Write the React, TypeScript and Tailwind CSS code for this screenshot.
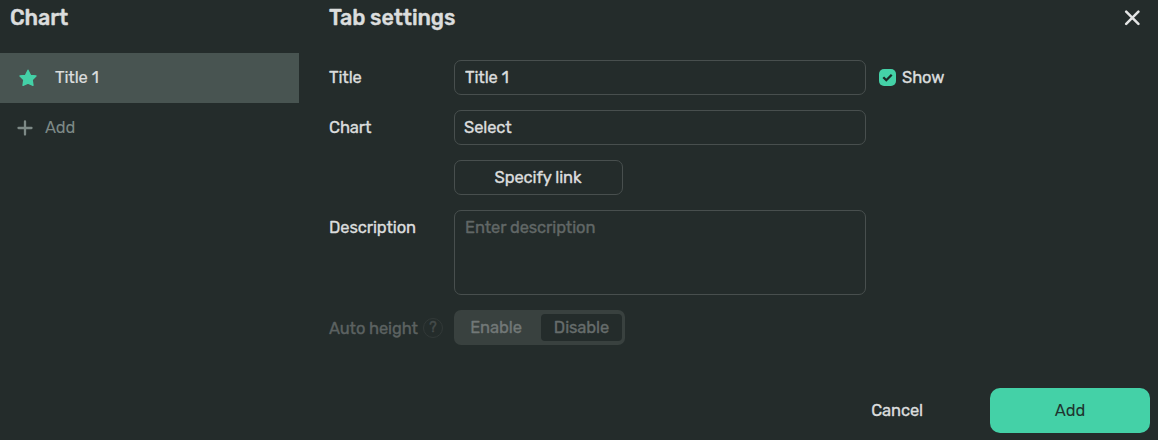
import { useState } from "react";

export default function App() {
  const [title, setTitle] = useState("Title 1");
  return (
    <div className="flex h-[440px] w-full overflow-hidden bg-[#242c2b] font-['Rubik','Roboto',sans-serif] text-[16.5px] leading-5 tracking-[-0.1px] text-[#dbdddd]">
      <aside className="w-[299px] shrink-0">
        <h2 className="h-[53px] pl-[10px] pt-[6px] text-[21.5px] font-medium leading-6 tracking-[-0.1px] [-webkit-text-stroke:0.4px]">Chart</h2>
        <div className="flex h-[50px] items-center bg-[#485451] pl-[19px]">
          <svg width="18" height="18" viewBox="0 0 18 18" fill="#44d1a7" stroke="#44d1a7" strokeWidth="1.3" strokeLinejoin="round">
            <path d="M9 1.2 11.5 6.3 17 7 13.2 10.9 14 16.4 9 14.1 4 16.4 4.8 10.9 1 7 6.5 6.3Z" />
          </svg>
          <span className="ml-[18px] [-webkit-text-stroke:0.2px]">Title 1</span>
        </div>
        <div className="flex h-[50px] items-center pl-[17px] text-[#7d8986]">
          <svg width="16" height="16" viewBox="0 0 16 16" fill="none" stroke="currentColor" strokeWidth="2.3" strokeLinecap="round">
            <path d="M8 1.5v13M1.5 8h13" />
          </svg>
          <span className="ml-3">Add</span>
        </div>
      </aside>
      <main className="flex min-w-0 flex-1 flex-col pl-[30px] pr-2">
        <header className="flex h-[60px] items-start justify-between pt-[6px]">
          <h2 className="text-[21.5px] font-medium leading-6 tracking-[-0.1px] [-webkit-text-stroke:0.4px]">Tab settings</h2>
          <svg width="16" height="16" viewBox="0 0 16 16" className="mr-[10px] mt-[4px]" fill="none" stroke="#e4e5e5" strokeWidth="2.5" strokeLinecap="round">
            <path d="m2.2 1.7 12.2 12.2M14.4 1.7 2.2 13.9" />
          </svg>
        </header>
        <div className="flex flex-col gap-[15px] [-webkit-text-stroke:0.35px]">
          <div className="flex h-[35px] items-center">
            <label className="w-[125px]">Title</label>
            <input
              value={title}
              onChange={(e) => setTitle(e.target.value)}
              className="h-[35px] w-[412px] rounded-[7px] border border-[#484f4e] bg-transparent px-[10px] outline-none"
            />
            <span className="ml-[13px] flex size-[17px] items-center justify-center rounded-[5px] bg-[#44d1a7]">
              <svg width="11" height="9" viewBox="0 0 11 9" fill="none" stroke="#1b2926" strokeWidth="2.3">
                <path d="m1.3 4.2 3 3L9.7 1.7" />
              </svg>
            </span>
            <span className="ml-[6px]">Show</span>
          </div>
          <div className="flex h-[35px] items-center">
            <label className="w-[125px]">Chart</label>
            <div className="flex h-[35px] w-[412px] items-center rounded-[7px] border border-[#484f4e] px-[9px]">Select</div>
          </div>
          <div className="flex pl-[125px]">
            <button className="h-[35px] w-[169px] rounded-[7px] border border-[#484f4e] pr-px">Specify link</button>
          </div>
          <div className="flex h-[85px]">
            <label className="w-[125px] pt-2">Description</label>
            <textarea
              placeholder="Enter description"
              className="h-[85px] w-[412px] resize-none rounded-[7px] border border-[#484f4e] bg-transparent px-[10px] py-[7px] outline-none placeholder:text-[#616766]"
            />
          </div>
          <div className="flex h-[35px] items-center text-[#5c6261]">
            <div className="flex w-[125px] items-center pt-px">
              <span className="w-[94px] pt-px tracking-[-0.15px]">Auto height</span>
              <span className="flex size-5 items-center justify-center rounded-full border border-[#323938] text-[14px] text-[#444b4a]">?</span>
            </div>
            <div className="flex h-[35px] w-[171px] rounded-[7px] bg-[#39413f] p-[3px] text-[#727877]">
              <span className="flex w-[84px] items-center justify-center pr-[6px]">Enable</span>
              <span className="my-px flex w-[81px] items-center justify-center rounded bg-[#242c2b] text-[#666c6b]">Disable</span>
            </div>
          </div>
        </div>
        <footer className="mt-auto flex h-[52px] items-start justify-end pb-[7px]">
          <button className="mr-[67px] h-[45px] [-webkit-text-stroke:0.35px]">Cancel</button>
          <button className="h-[45px] w-40 rounded-[10px] bg-[#44d1a7] text-[#1f3530]">Add</button>
        </footer>
      </main>
    </div>
  );
}
